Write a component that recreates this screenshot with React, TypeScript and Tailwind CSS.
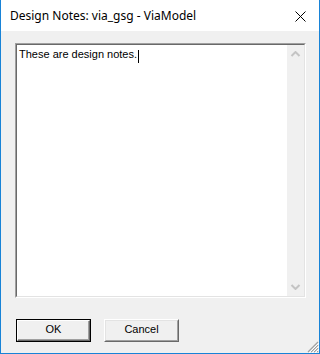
export default function App() {
  return (
    <div className="flex h-[354px] w-[320px] flex-col border-x border-b border-[#1883d7] bg-[#f0f0f0] font-['Liberation_Sans',Arial,sans-serif]">
      {/* Title bar */}
      <div className="flex h-[31px] shrink-0 items-center justify-between bg-white pl-[9px] pr-[13px]">
        <span className="font-['Noto_Sans',sans-serif] text-[12px] text-black">
          Design Notes: via_gsg - ViaModel
        </span>
        <svg width="11" height="11" viewBox="0 0 11 11" className="mt-[1px]">
          <path d="M0.5 0.5 L10.5 10.5 M10.5 0.5 L0.5 10.5" stroke="#000" strokeWidth="1" fill="none" />
        </svg>
      </div>

      {/* Body */}
      <div className="relative flex flex-1 flex-col px-[14px] pt-[12px]">
        {/* Notes text box (sunken) */}
        <div className="h-[255px] w-[291px] border-l border-t border-b border-r border-l-[#a0a0a0] border-t-[#a0a0a0] border-b-white border-r-white">
          <div className="flex h-full w-full border border-l-[#696969] border-t-[#696969] border-b-[#e3e3e3] border-r-[#e3e3e3] bg-white">
            <div className="flex-1 pl-[2px] pt-[3px] text-[11px] leading-[13px] text-black">
              These are design notes.
              <span className="ml-[1px] inline-block h-[13px] w-[1px] translate-y-[2px] bg-black align-top" />
            </div>
            <div className="flex w-[17px] flex-col justify-between bg-[#f0f0f0] py-[6px]">
              <svg width="17" height="6" viewBox="0 0 17 6">
                <path d="M4.5 5 L8.5 1 L12.5 5" stroke="#c4c4c4" strokeWidth="2" fill="none" />
              </svg>
              <svg width="17" height="6" viewBox="0 0 17 6">
                <path d="M4.5 1 L8.5 5 L12.5 1" stroke="#c4c4c4" strokeWidth="2" fill="none" />
              </svg>
            </div>
          </div>
        </div>

        {/* Buttons */}
        <div className="mt-[21px] flex gap-[13px] pl-[1px]">
          <button className="h-[23px] w-[75px] border border-black">
            <div className="h-full w-full border border-l-white border-t-white border-b-[#696969] border-r-[#696969] bg-[#f0f0f0] text-[11px] text-black shadow-[inset_-1px_-1px_0_#a0a0a0]">
              OK
            </div>
          </button>
          <button className="h-[23px] w-[75px] border border-l-white border-t-white border-b-[#696969] border-r-[#696969]">
            <div className="h-full w-full border border-transparent border-b-[#a0a0a0] border-r-[#a0a0a0] border-l-[#e3e3e3] border-t-[#e3e3e3] bg-[#f0f0f0] text-[11px] text-black">
              Cancel
            </div>
          </button>
        </div>

        {/* Resize grip */}
        <svg width="12" height="12" viewBox="0 0 12 12" className="absolute bottom-0 right-0">
          <path d="M11 1 L1 11 M11 4 L4 11 M11 7 L7 11 M11 10 L10 11" stroke="#a0a0a0" strokeWidth="1.2" fill="none" />
          <path d="M12 2 L2 12 M12 5 L5 12 M12 8 L8 12" stroke="#ffffff" strokeWidth="1" fill="none" />
        </svg>
      </div>
    </div>
  );
}
